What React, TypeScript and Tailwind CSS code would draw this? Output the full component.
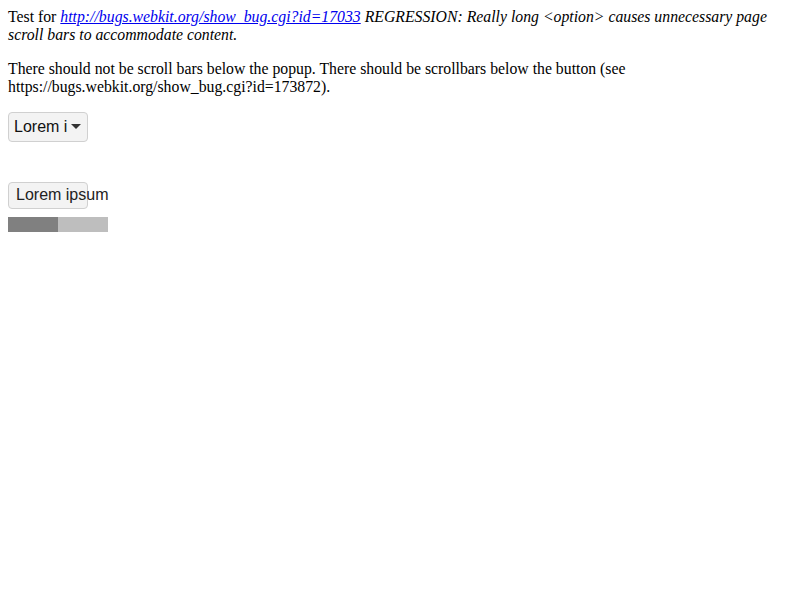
import React from "react";

export default function App() {
  return (
    <div className="bg-white min-h-[600px] p-2 text-black text-[15.77px] leading-[18px]" style={{ fontFamily: '"Liberation Serif", "Times New Roman", serif' }}>
      <p>
        Test for{" "}
        <i>
          <a href="#" className="text-[#0000ee] underline">
            http://bugs.webkit.org/show_bug.cgi?id=17033
          </a>{" "}
          REGRESSION: Really long &lt;option&gt; causes unnecessary page scroll bars to accommodate content.
        </i>
      </p>
      <p className="mt-4">
        There should not be scroll bars below the popup. There should be scrollbars below the button (see
        https://bugs.webkit.org/show_bug.cgi?id=173872).
      </p>
      <div className="mt-4 w-[80px] h-[30px] rounded-[4px] border border-[#d0d0d0] bg-[#f3f3f3] flex items-center pl-[5px] pr-[6px] overflow-hidden" style={{ fontFamily: '"Liberation Sans", Arial, sans-serif' }}>
        <span className="text-[16px] text-[#111] whitespace-nowrap overflow-hidden flex-1">Lorem i</span>
        <svg width="10" height="6" viewBox="0 0 10 6" className="ml-[2px] shrink-0">
          <path d="M0 0 L10 0 L5 5 Z" fill="#333" />
        </svg>
      </div>
      <div className="mt-[40px] w-[100px]">
        <div className="relative w-[80px] h-[27px] rounded-[4px] border border-[#d0d0d0] bg-[#f3f3f3]" style={{ fontFamily: '"Liberation Sans", Arial, sans-serif' }}>
          <span className="absolute left-[7px] top-[3px] text-[16px] leading-[18px] text-[#222] whitespace-nowrap">Lorem ipsum</span>
        </div>
        <div className="mt-[8px] flex h-[15px] w-[100px]">
          <div className="w-[50px] bg-[#808080]" />
          <div className="flex-1 bg-[#bebebe]" />
        </div>
      </div>
    </div>
  );
}
